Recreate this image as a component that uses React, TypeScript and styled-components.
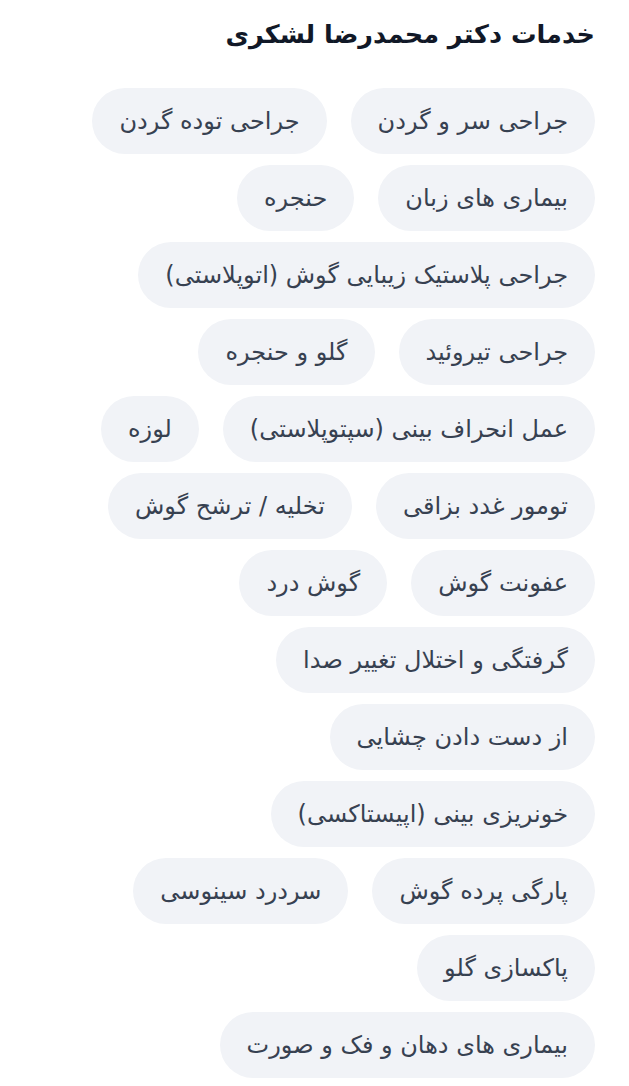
import styled, { createGlobalStyle } from 'styled-components'

const GlobalStyle = createGlobalStyle`
    body {
        margin: 0;
        background: #ffffff;
        font-family: "DejaVu Sans", "Noto Sans", sans-serif;
    }
`

const Section = styled.section`
    direction: rtl;
    padding: 14px 34px 0 34px;
`

const Title = styled.h2`
    margin: 0 0 34px 0;
    font-size: 25.5px;
    line-height: 40px;
    font-weight: 700;
    color: #111827;
`

const ChipList = styled.ul`
    display: flex;
    flex-wrap: wrap;
    gap: 11px 24px;
    margin: 0;
    padding: 0;
    list-style: none;
`

const Chip = styled.li`
    height: 66px;
    display: flex;
    align-items: center;
    padding: 0 27px;
    border-radius: 33px;
    background-color: #f1f3f7;
    color: #374151;
    font-size: 24px;
    white-space: nowrap;
`

const services = [
    'جراحی سر و گردن',
    'جراحی توده گردن',
    'بیماری های زبان',
    'حنجره',
    'جراحی پلاستیک زیبایی گوش (اتوپلاستی)',
    'جراحی تیروئید',
    'گلو و حنجره',
    'عمل انحراف بینی (سپتوپلاستی)',
    'لوزه',
    'تومور غدد بزاقی',
    'تخلیه / ترشح گوش',
    'عفونت گوش',
    'گوش درد',
    'گرفتگی و اختلال تغییر صدا',
    'از دست دادن چشایی',
    'خونریزی بینی (اپیستاکسی)',
    'پارگی پرده گوش',
    'سردرد سینوسی',
    'پاکسازی گلو',
    'بیماری های دهان و فک و صورت',
]

const App = () => {
    return (
        <>
            <GlobalStyle />
            <Section>
                <Title>خدمات دکتر محمدرضا لشکری</Title>
                <ChipList>
                    {services.map((s) => (
                        <Chip key={s}>{s}</Chip>
                    ))}
                </ChipList>
            </Section>
        </>
    )
}

export default App
